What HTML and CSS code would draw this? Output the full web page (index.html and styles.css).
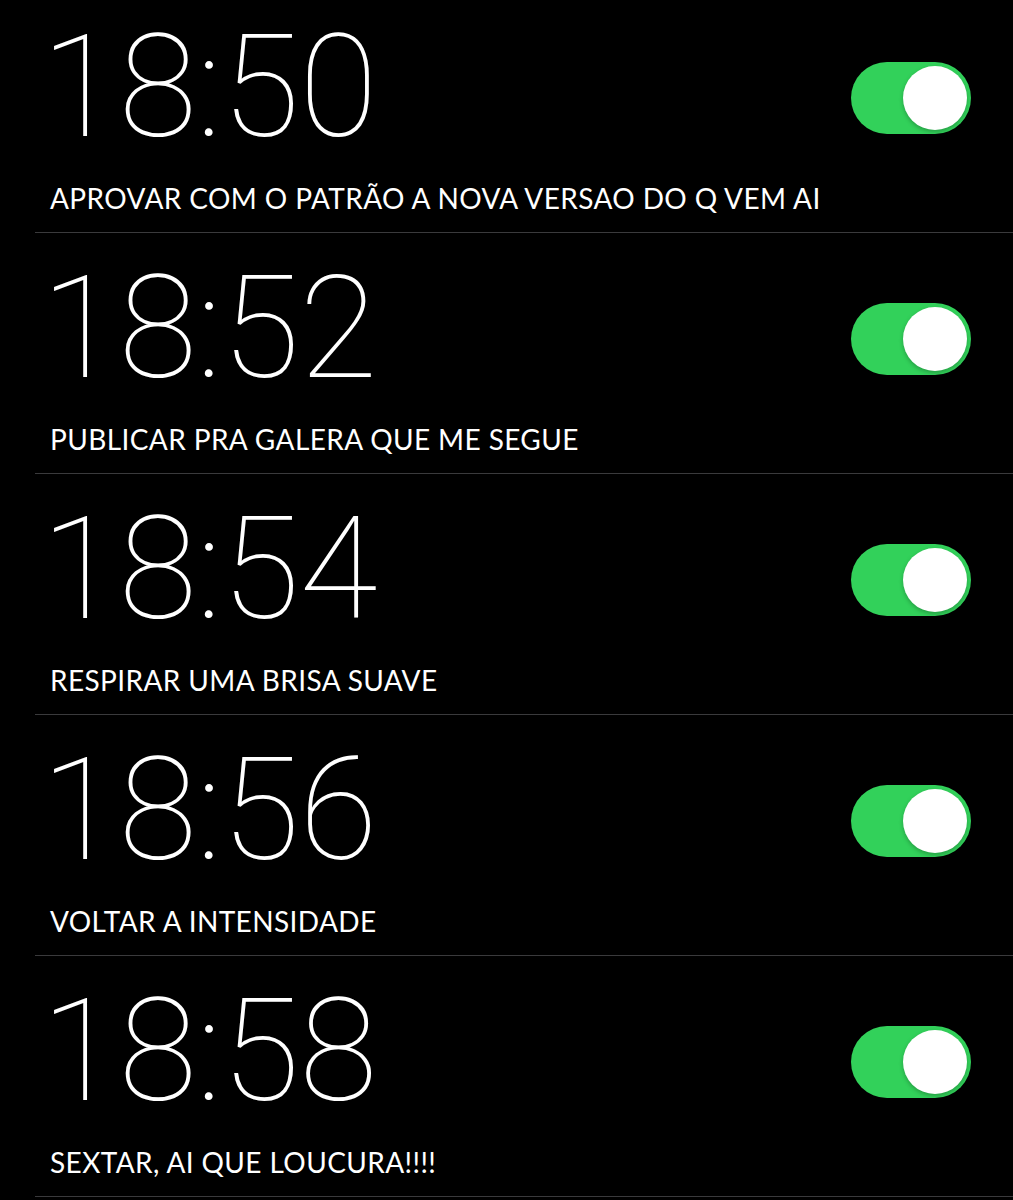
FILE: index.html
```html
<!DOCTYPE html>
<html lang="pt">
<head>
  <meta charset="UTF-8">
  <meta name="viewport" content="width=device-width, initial-scale=1.0">
  <title>Alarmes</title>
  <link rel="stylesheet" href="styles.css">
</head>
<body>
  <div class="alarm-list">
    <div class="alarm">
      <div class="alarm-info">
        <div class="alarm-time">18:50</div>
        <div class="alarm-label">APROVAR COM O PATRÃO A NOVA VERSAO DO Q VEM AI</div>
      </div>
      <div class="toggle on"><div class="knob"></div></div>
    </div>
    <div class="alarm">
      <div class="alarm-info">
        <div class="alarm-time">18:52</div>
        <div class="alarm-label">PUBLICAR PRA GALERA QUE ME SEGUE</div>
      </div>
      <div class="toggle on"><div class="knob"></div></div>
    </div>
    <div class="alarm">
      <div class="alarm-info">
        <div class="alarm-time">18:54</div>
        <div class="alarm-label">RESPIRAR UMA BRISA SUAVE</div>
      </div>
      <div class="toggle on"><div class="knob"></div></div>
    </div>
    <div class="alarm">
      <div class="alarm-info">
        <div class="alarm-time">18:56</div>
        <div class="alarm-label">VOLTAR A INTENSIDADE</div>
      </div>
      <div class="toggle on"><div class="knob"></div></div>
    </div>
    <div class="alarm">
      <div class="alarm-info">
        <div class="alarm-time">18:58</div>
        <div class="alarm-label">SEXTAR, AI QUE LOUCURA!!!!</div>
      </div>
      <div class="toggle on"><div class="knob"></div></div>
    </div>
  </div>
</body>
</html>
```

FILE: styles.css
```css
body {
  margin: 0;
  background-color: #000;
  color: #fff;
  font-family: 'Roboto', 'Liberation Sans', sans-serif;
}
.alarm-list {
  margin-top: -8px;
}
.alarm {
  display: flex;
  justify-content: space-between;
  align-items: flex-start;
  height: 240px;
  margin-left: 35px;
  padding-left: 15px;
  border-bottom: 1px solid #3a3a3c;
}
.alarm-info {
  display: flex;
  flex-direction: column;
}
.alarm-time {
  font-size: 143px;
  font-weight: 100;
  line-height: 1;
  margin-top: 24px;
  margin-left: -9px;
  letter-spacing: -0.5px;
}
.alarm-label {
  font-family: 'Lato', 'Roboto', sans-serif;
  font-size: 28px;
  font-weight: 400;
  line-height: 1;
  margin-top: 25px;
  letter-spacing: 0.4px;
}
.toggle {
  width: 120px;
  height: 72px;
  margin-top: 70px;
  margin-right: 42px;
  border-radius: 36px;
  background-color: #32d15a;
  position: relative;
}
.toggle .knob {
  position: absolute;
  top: 4px;
  right: 4px;
  width: 64px;
  height: 64px;
  border-radius: 50%;
  background-color: #fff;
  box-shadow: 0 2px 4px rgba(0, 0, 0, 0.25);
}
```
